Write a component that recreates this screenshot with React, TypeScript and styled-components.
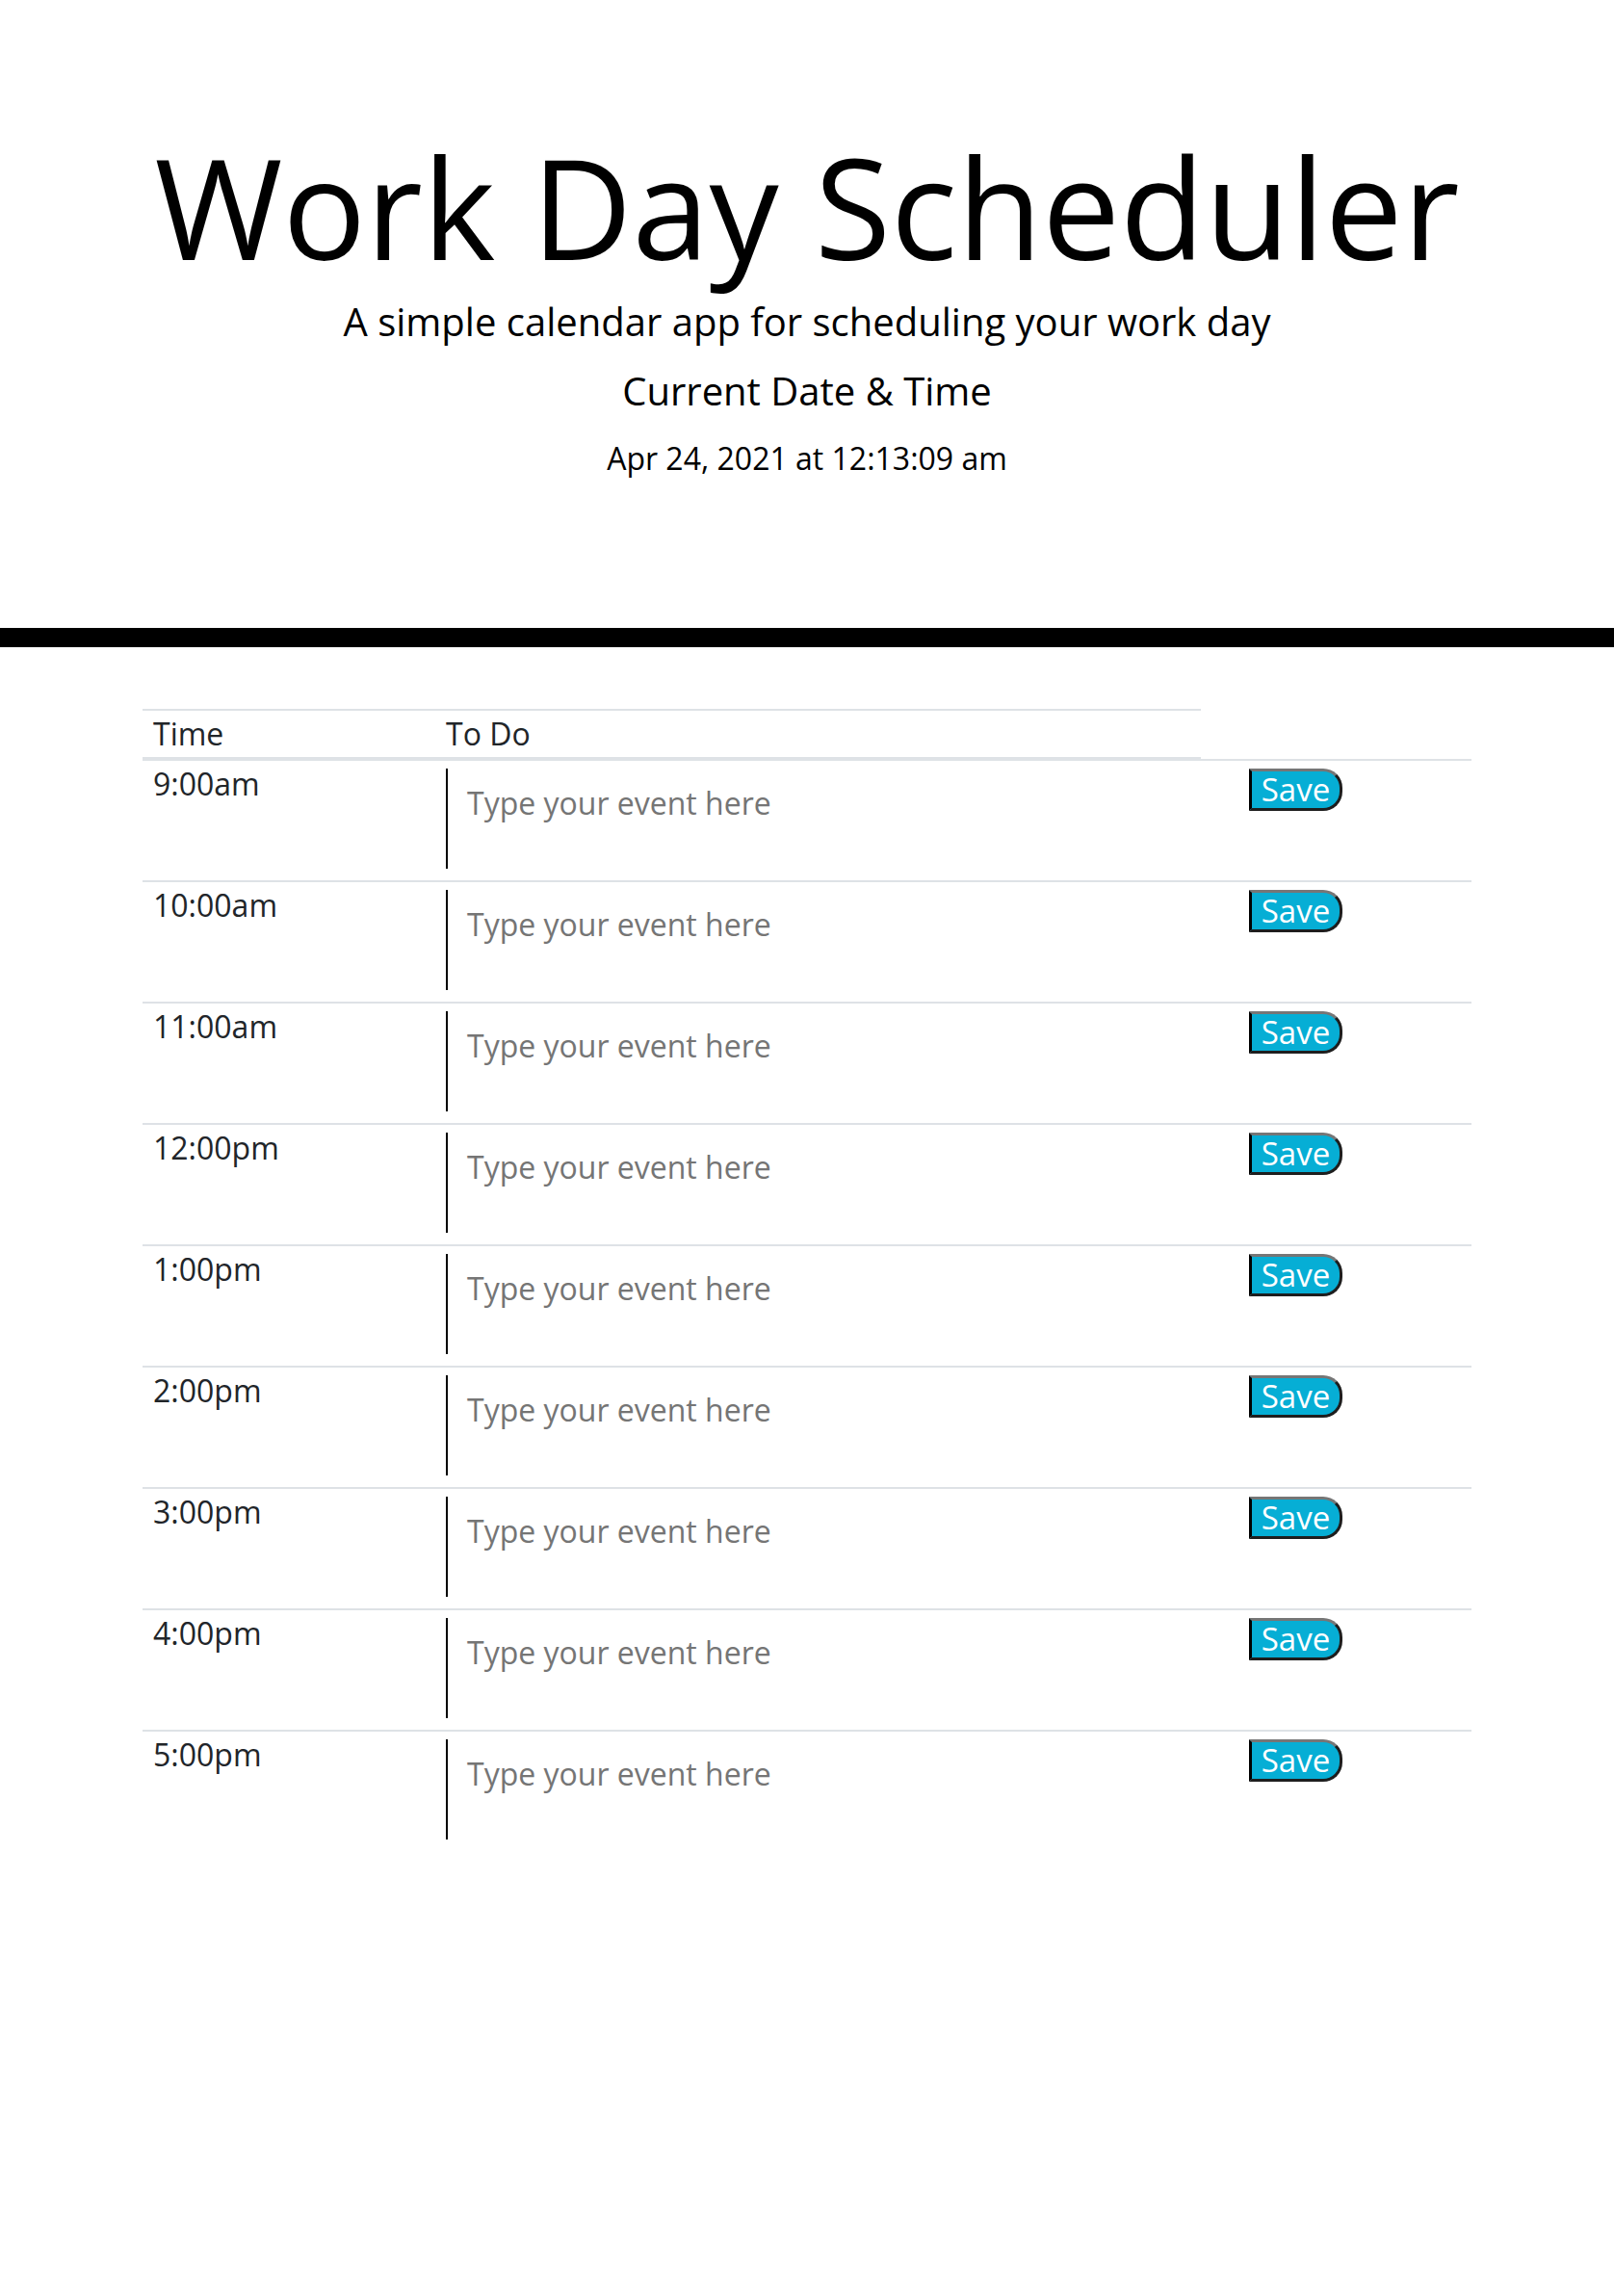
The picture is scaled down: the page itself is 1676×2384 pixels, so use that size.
import React, { useState } from "react";
import styled, { createGlobalStyle } from "styled-components";

const GlobalStyle = createGlobalStyle`
	body {
		margin: 0;
		background: #ffffff;
		font-family: "Open Sans", "Liberation Sans", sans-serif;
		color: #212529;
		line-height: 1;
	}
`;

const Header = styled.header`
	padding: 128px 0 160px;
	text-align: center;
	color: #000000;
	border-bottom: 20px solid #000000;
`;

const Title = styled.h1`
	margin: 0 0 13px;
	font-size: 144px;
	font-weight: 400;
	line-height: 1.2;
`;

const Lead = styled.p<{ size: number; gap: number }>`
	margin: 0 0 ${props => props.gap}px;
	font-size: ${props => props.size}px;
	line-height: 1;
`;

const Container = styled.main`
	width: 1380px;
	margin: 64px auto 0;
`;

const Row = styled.div<{ head?: boolean }>`
	display: grid;
	grid-template-columns: 304px 795px 1fr;
	border-top: ${props => props.head ? 'none' : '2px solid #dee2e6'};
`;

const HeadCell = styled.div`
	padding: 8px 11px;
	font-size: 32px;
	line-height: 1;
	border-top: 2px solid #dee2e6;
	border-bottom: 2px solid #dee2e6;
`;

const HourCell = styled.div`
	padding: 8px 11px;
	font-size: 32px;
	line-height: 1;
`;

const TextCell = styled.div`
	padding: 8px 0 12px 11px;
`;

const Description = styled.textarea`
	display: block;
	box-sizing: border-box;
	width: 100%;
	height: 104px;
	margin: 0;
	padding: 20px;
	background: transparent;
	border: none;
	border-left: 2px solid #000000;
	resize: none;
	outline: none;
	color: #000000;
	font-family: "Open Sans", "Liberation Sans", sans-serif;
	font-size: 32px;
	line-height: 1;

	&::placeholder {
		color: #757575;
	}
`;

const ButtonCell = styled.div`
	padding: 8px 0 0 50px;
`;

const SaveButton = styled.button`
	box-sizing: border-box;
	width: 97px;
	height: 44px;
	padding: 0;
	background-color: #06aed5;
	color: #ffffff;
	font-family: "Open Sans", "Liberation Sans", sans-serif;
	font-size: 33px;
	line-height: 1;
	border-style: solid;
	border-width: 3px;
	border-color: #767676 #1e1e1e #1e1e1e #000000;
	border-radius: 0 20px 20px 0;
	cursor: pointer;
`;

const hours = ["9:00am", "10:00am", "11:00am", "12:00pm", "1:00pm", "2:00pm", "3:00pm", "4:00pm", "5:00pm"];

export default function App() {
	const [notes, setNotes] = useState<Record<string, string>>({});

	return (
		<>
			<GlobalStyle />
			<Header>
				<Title>Work Day Scheduler</Title>
				<Lead size={40} gap={32}>A simple calendar app for scheduling your work day</Lead>
				<Lead size={40} gap={34}>Current Date &amp; Time</Lead>
				<Lead size={32} gap={0}>Apr 24, 2021 at 12:13:09 am</Lead>
			</Header>

			<Container>
				<Row head>
					<HeadCell>Time</HeadCell>
					<HeadCell>To Do</HeadCell>
				</Row>
				{hours.map(hour => (
					<Row key={hour}>
						<HourCell>{hour}</HourCell>
						<TextCell>
							<Description
								rows={2}
								placeholder="Type your event here"
								value={notes[hour] || ''}
								onChange={e => setNotes({ ...notes, [hour]: e.target.value })}
							/>
						</TextCell>
						<ButtonCell>
							<SaveButton>Save</SaveButton>
						</ButtonCell>
					</Row>
				))}
			</Container>
		</>
	);
}
